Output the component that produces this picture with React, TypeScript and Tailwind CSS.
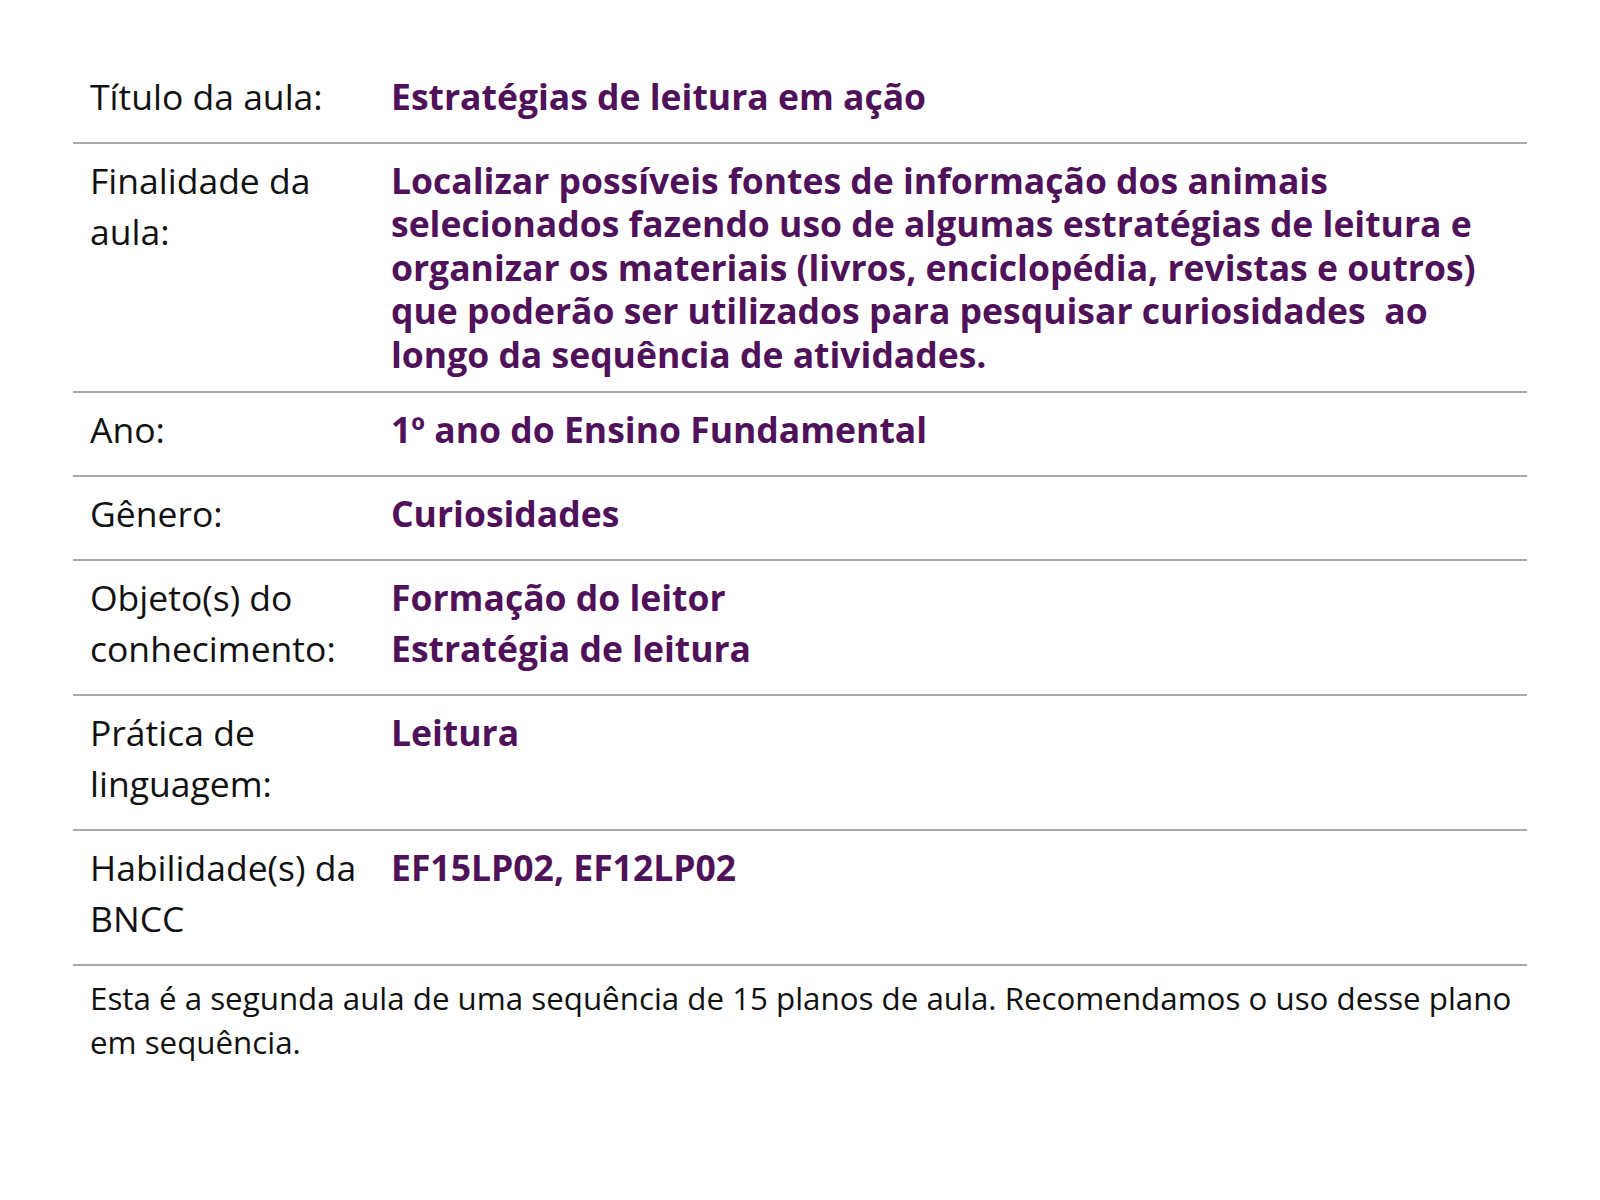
import React from "react";

const Row = ({ label, children, valueClass = "pt-[11px] leading-[51px]" }: { label: React.ReactNode; children: React.ReactNode; valueClass?: string }) => (
  <div className="flex border-b-2 border-[#a9a9a9]">
    <div className="w-[318px] shrink-0 pl-[17px] pr-[8px] pt-[11px] pb-[20px] leading-[51px] text-[35.5px] text-[#111111]">
      {label}
    </div>
    <div className={`flex-1 pr-[10px] pb-[20px] text-[35.5px] font-bold text-[#4f1159] ${valueClass}`}>
      {children}
    </div>
  </div>
);

export default function App() {
  return (
    <div className="min-h-[1200px] bg-white" style={{ fontFamily: '"Open Sans", "Noto Sans", sans-serif' }}>
      <div className="mx-auto w-[1454px] pt-[60px]">
        <Row label="Título da aula:">Estratégias de leitura em ação</Row>
        <Row label={<>Finalidade da<br />aula:</>} valueClass="pt-[15px] leading-[43.4px] !pb-[15px]">
          Localizar possíveis fontes de informação dos animais<br />
          selecionados fazendo uso de algumas estratégias de leitura e<br />
          organizar os materiais (livros, enciclopédia, revistas e outros)<br />
          que poderão ser utilizados para pesquisar curiosidades&nbsp; ao<br />
          longo da sequência de atividades.
        </Row>
        <Row label="Ano:">1º ano do Ensino Fundamental</Row>
        <Row label="Gênero:">Curiosidades</Row>
        <Row label={<>Objeto(s) do<br />conhecimento:</>}>
          Formação do leitor<br />Estratégia de leitura
        </Row>
        <Row label={<>Prática de<br />linguagem:</>}>Leitura</Row>
        <Row label={<>Habilidade(s) da<br />BNCC</>}>EF15LP02, EF12LP02</Row>
        <div className="whitespace-nowrap pl-[17px] pt-[10px] text-[31.3px] leading-[44px] text-[#111111]">
          Esta é a segunda aula de uma sequência de 15 planos de aula. Recomendamos o uso desse plano<br />em sequência.
        </div>
      </div>
    </div>
  );
}
